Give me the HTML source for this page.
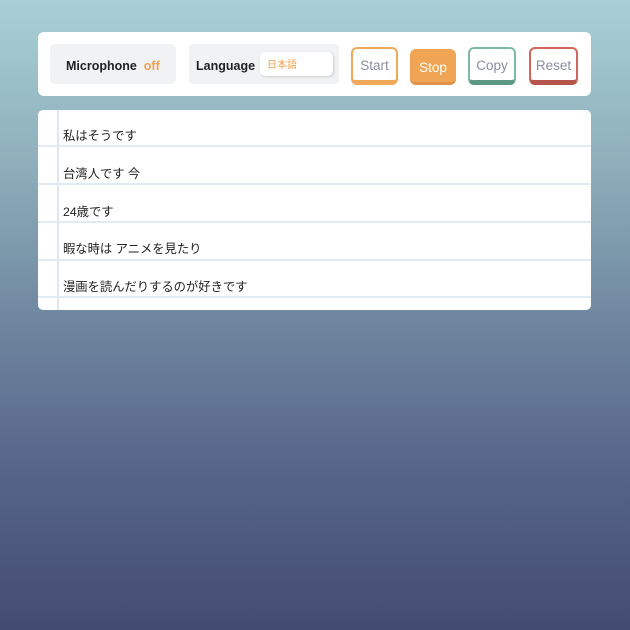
<!DOCTYPE html>
<html><head><meta charset="utf-8"><style>
*{box-sizing:border-box;margin:0;padding:0}
body{width:630px;height:630px;overflow:hidden;background:linear-gradient(180deg,#a8d0d6 0%,#8fb0bc 25%,#7088a0 50%,#56648a 75%,#434b72 100%);font-family:"Liberation Sans","Noto Sans CJK JP",sans-serif;position:relative}
.bar{position:absolute;left:38px;top:32px;width:553px;height:64px;background:#fff;border-radius:6px}
.box{position:absolute;top:12px;height:40px;background:#f1f2f4;border-radius:5px;font-size:12.5px;font-weight:bold;color:#222;display:flex;align-items:center;padding-top:3px}
.sel{position:absolute;left:71px;top:8px;width:73px;height:24px;background:#fff;border-radius:5px;box-shadow:1px 1px 2px #ccc;color:#f0a050;font-size:10px;font-weight:normal;padding:7px 7px 0;line-height:14px}
.btn{position:absolute;border-radius:6px;font-size:13.5px;display:flex;align-items:center;justify-content:center;color:#8a8fa0;background:#fff;padding-top:2px}
.paper{position:absolute;left:38px;top:110px;width:553px;height:200px;background:#fff;border-radius:5px;overflow:hidden}
.vl{position:absolute;left:19px;top:0;bottom:0;width:2px;background:#dde7f0}
.hl{position:absolute;left:0;right:0;height:2px;background:#e3ebf2}
.t{position:absolute;left:25px;font-size:12.3px;color:#222}
</style></head><body>
<div class="bar">
 <div class="box" style="left:12px;width:126px;padding-left:16px">Microphone&nbsp;&nbsp;<span style="color:#f0a050">off</span></div>
 <div class="box" style="left:151px;width:150px;padding-left:7px">Language<div class="sel">日本語</div></div>
 <div class="btn" style="left:313px;top:15px;width:47px;height:38px;border:2px solid #f0a85a;border-bottom-width:5px">Start</div>
 <div class="btn" style="left:372px;top:17px;width:46px;height:36px;background:#f0a555;color:#fff;border-bottom:3px solid #e0914a;padding-top:4px">Stop</div>
 <div class="btn" style="left:430px;top:15px;width:48px;height:38px;border:2px solid #7fb9a6;border-bottom-width:5px;border-bottom-color:#5e9985">Copy</div>
 <div class="btn" style="left:491px;top:15px;width:49px;height:38px;border:2px solid #d2665a;border-bottom-width:5px;border-bottom-color:#b5544a">Reset</div>
</div>
<div class="paper">
 <div class="vl"></div>
 <div class="hl" style="top:35px"></div>
 <div class="hl" style="top:73px"></div>
 <div class="hl" style="top:111px"></div>
 <div class="hl" style="top:149px"></div>
 <div class="hl" style="top:186px"></div>
 <div class="t" style="top:16px">私はそうです</div>
 <div class="t" style="top:54px">台湾人です 今</div>
 <div class="t" style="top:92px">24歳です</div>
 <div class="t" style="top:129px">暇な時は アニメを見たり</div>
 <div class="t" style="top:167px">漫画を読んだりするのが好きです</div>
</div>
</body></html>
